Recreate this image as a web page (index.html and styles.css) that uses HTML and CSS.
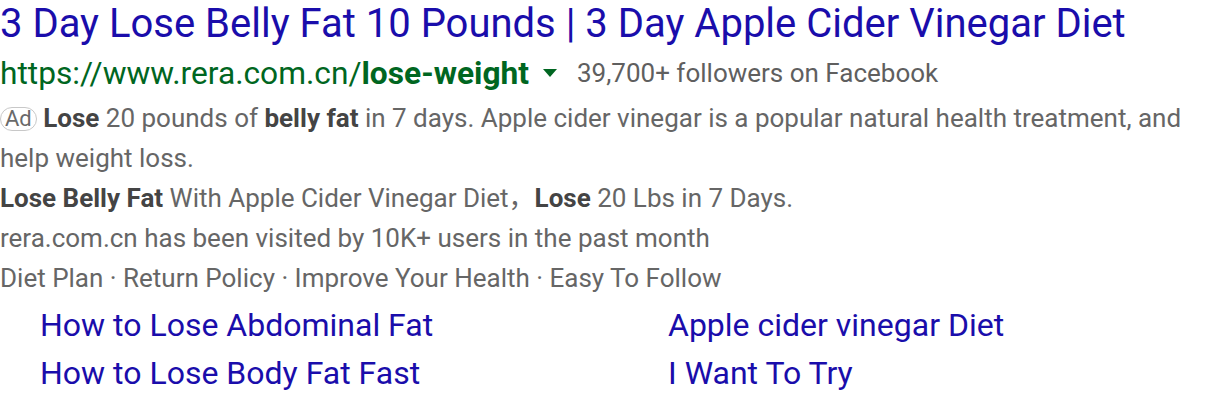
FILE: index.html
```html
<!DOCTYPE html>
<html lang="en">
<head>
<meta charset="utf-8">
<title>Ad result</title>
<link rel="stylesheet" href="styles.css">
</head>
<body>
<div class="ad">
  <h3 class="title">3 Day Lose Belly Fat 10 Pounds | 3 Day Apple Cider Vinegar Diet</h3>
  <div class="urlline">
    <span class="url">https://www.rera.com.cn/<b>lose-weight</b></span>
    <svg class="caret" width="14" height="8" viewBox="0 0 14 8"><path d="M0 0 L14 0 L7 8 Z" fill="#006621"/></svg>
    <span class="followers">39,700+ followers on Facebook</span>
  </div>
  <div class="desc">
    <p><span class="badge">Ad</span> <b>Lose</b> 20 pounds of <b>belly fat</b> in 7 days. Apple cider vinegar is a popular natural health treatment, and help weight loss.</p>
    <p><b>Lose Belly Fat</b> With Apple Cider Vinegar Diet，<b>Lose</b> 20 Lbs in 7 Days.</p>
    <p>rera.com.cn has been visited by 10K+ users in the past month</p>
    <p>Diet Plan · Return Policy · Improve Your Health · Easy To Follow</p>
  </div>
  <div class="sitelinks">
    <a href="#">How to Lose Abdominal Fat</a>
    <a href="#">Apple cider vinegar Diet</a>
    <a href="#">How to Lose Body Fat Fast</a>
    <a href="#">I Want To Try</a>
  </div>
</div>
</body>
</html>
```
FILE: styles.css
```css
html, body {
  margin: 0;
  padding: 0;
  background: #fff;
}
body {
  font-family: Roboto, "Noto Sans CJK SC", sans-serif;
  width: 1216px;
}
.ad {
  display: flex;
  flex-direction: column;
}
.title {
  margin: 0;
  font-weight: 400;
  font-size: 40px;
  line-height: 48px;
  color: #1a0dab;
  white-space: nowrap;
}
.urlline {
  display: flex;
  align-items: center;
  height: 50px;
  white-space: nowrap;
}
.url {
  font-size: 31.7px;
  color: #006621;
}
.url b {
  font-weight: 700;
}
.caret {
  margin-left: 14px;
  margin-right: 20px;
}
.followers {
  font-size: 26px;
  color: #5f5f5f;
}
.desc {
  width: 1200px;
  font-size: 26px;
  line-height: 40px;
  color: #666;
}
.desc p {
  margin: 0;
}
.desc b {
  color: #444;
  font-weight: 700;
}
.badge {
  display: inline-block;
  box-sizing: border-box;
  height: 24px;
  line-height: 21px;
  padding: 0 4px;
  border: 1px solid #c8c8c8;
  border-radius: 12px;
  font-size: 22px;
  color: #6a6a6a;
  vertical-align: 1px;
}
.sitelinks {
  display: grid;
  grid-template-columns: 628px 1fr;
  grid-auto-rows: 48px;
  padding-left: 40px;
  padding-top: 3px;
}
.sitelinks a {
  font-size: 32px;
  line-height: 48px;
  color: #1a0dab;
  text-decoration: none;
  white-space: nowrap;
}
```
